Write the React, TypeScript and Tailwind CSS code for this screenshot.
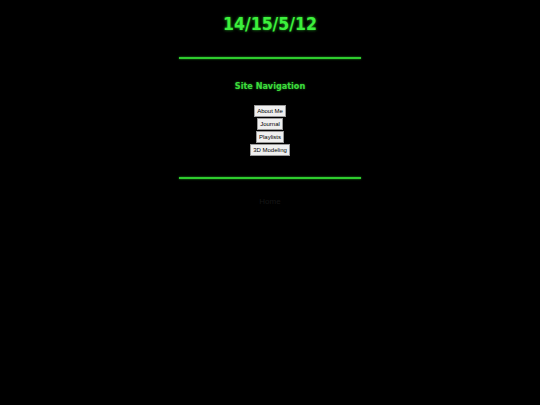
export default function App() {
  const links = ["About Me", "Journal", "Playlists", "3D Modeling"];
  return (
    <div className="min-h-[405px] w-full bg-black flex flex-col items-center pt-[13px] font-['DejaVu_Sans',sans-serif]">
      <h1 className="text-[17.5px] leading-[22px] font-bold font-stretch-condensed font-['DejaVu_Sans_Condensed','DejaVu_Sans',sans-serif] text-[#3cf03c] [text-shadow:0_0_3px_#22aa22]">
        14/15/5/12
      </h1>
      <div className="mt-[22px] w-[182px] h-[2px] bg-[#2ecc2e] shadow-[0_0_2px_#22aa22]" />
      <h2 className="mt-[21px] text-[9px] leading-[12px] font-bold font-stretch-condensed font-['DejaVu_Sans_Condensed','DejaVu_Sans',sans-serif] text-[#3cdc3c] [text-shadow:0_0_2px_#228822]">
        Site Navigation
      </h2>
      <div className="mt-[13px] flex flex-col items-center gap-[1px]">
        {links.map((l) => (
          <button
            key={l}
            className="h-[12px] px-[2px] bg-[#efefef] border border-[#9a9a9a] text-[6px] leading-[10px] text-black font-['Liberation_Sans',Arial,sans-serif]"
          >
            {l}
          </button>
        ))}
      </div>
      <div className="mt-[21px] w-[182px] h-[2px] bg-[#2ecc2e] shadow-[0_0_2px_#22aa22]" />
      <p className="mt-[18px] text-[8px] leading-[10px] text-[#161616] font-['Liberation_Sans',Arial,sans-serif]">Home</p>
    </div>
  );
}
